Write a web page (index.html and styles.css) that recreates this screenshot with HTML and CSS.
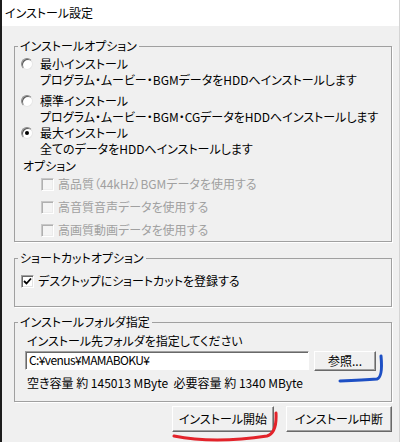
FILE: index.html
```html
<!DOCTYPE html>
<html lang="ja">
<head>
<meta charset="utf-8">
<title>インストール設定</title>
<link rel="stylesheet" href="styles.css">
</head>
<body>
<div class="window">
  <div class="titlebar">インストール設定</div>
  <div class="client">
    <fieldset class="group g1">
      <legend>インストールオプション</legend>
      <div class="opt o1">
        <span class="radio"></span>
        <div class="lines"><div>最小インストール</div><div>プログラム・ムービー・BGMデータをHDDへインストールします</div></div>
      </div>
      <div class="opt o2">
        <span class="radio"></span>
        <div class="lines"><div>標準インストール</div><div>プログラム・ムービー・BGM・CGデータをHDDへインストールします</div></div>
      </div>
      <div class="opt o3">
        <span class="radio checked"></span>
        <div class="lines"><div>最大インストール</div><div>全てのデータをHDDへインストールします</div></div>
      </div>
      <div class="sub">オプション</div>
      <div class="chk dis first"><span class="box"></span>高品質（44kHz）BGMデータを使用する</div>
      <div class="chk dis"><span class="box"></span>高音質音声データを使用する</div>
      <div class="chk dis"><span class="box"></span>高画質動画データを使用する</div>
    </fieldset>

    <fieldset class="group g2">
      <legend>ショートカットオプション</legend>
      <div class="chk"><span class="box checked"><svg viewBox="0 0 9 9" width="9" height="9"><path d="M1 4 L3.5 6.5 L8 1.5" fill="none" stroke="#000" stroke-width="1.8"/></svg></span>デスクトップにショートカットを登録する</div>
    </fieldset>

    <fieldset class="group g3">
      <legend>インストールフォルダ指定</legend>
      <div class="label">インストール先フォルダを指定してください</div>
      <div class="pathrow">
        <div class="input">C:¥venus¥MAMABOKU¥</div>
        <div class="btnwrap">
          <button class="btn browse">参照...</button>
          <svg class="scribble blue" viewBox="0 0 60 40" width="60" height="40"><path d="M6 33 Q30 32 43 31 Q49 29 47 8" fill="none" stroke="#1d4fc4" stroke-width="3" stroke-linecap="round"/></svg>
        </div>
      </div>
      <div class="free">空き容量 約 145013 MByte&nbsp; 必要容量 約 1340 MByte</div>
    </fieldset>

    <div class="buttons">
      <div class="btnwrap">
        <button class="btn start">インストール開始</button>
        <svg class="scribble red" viewBox="0 0 120 40" width="120" height="40"><path d="M5 31 Q45 39 98 31 Q108 28 107 8" fill="none" stroke="#e3232a" stroke-width="3" stroke-linecap="round"/></svg>
      </div>
      <button class="btn stop">インストール中断</button>
    </div>
  </div>
</div>
</body>
</html>
```

FILE: styles.css
```css
html, body {
  margin: 0;
  padding: 0;
  background: #ffffff;
}
body {
  font-family: "Noto Sans CJK JP", "Noto Sans", sans-serif;
  font-size: 12px;
  font-feature-settings: "palt";
  color: #000;
}
.window {
  width: 397px;
  height: 442px;
  border-left: 2px solid #1c1c1c;
  border-right: 1px solid #d4d4d4;
  display: flex;
  flex-direction: column;
  overflow: hidden;
}
.titlebar {
  height: 26px;
  line-height: 26px;
  padding-left: 3px;
  background: #ffffff;
  flex: none;
}
.client {
  flex: 1;
  background: #f0f0f0;
  padding: 13px 7px 0 12px;
  display: flex;
  flex-direction: column;
}
.group {
  margin: 0;
  min-width: 0;
  border: 1px solid #a0a0a0;
  box-shadow: 1px 1px 0 #ffffff;
  padding: 0 6px;
}
.group legend {
  line-height: 14px;
  padding: 0 2px;
  margin-left: -3px;
}
.g1 { padding-top: 3px; padding-bottom: 3px; }
.g2 { margin-top: 9px; padding-top: 8px; padding-bottom: 17px; }
.g3 { margin-top: 8px; padding: 4px 12px 10px 12px; }
.g3 legend { margin-left: -9px; }

.opt {
  display: flex;
  align-items: flex-start;
  line-height: 16px;
}
.o2 { margin-top: 5px; }
.lines { margin-left: 7px; }
.radio {
  flex: none;
  box-sizing: border-box;
  width: 12px;
  height: 12px;
  margin-top: 2px;
  border-radius: 50%;
  background: #fff;
  border: 1px solid;
  border-color: #8a8a8a #e6e6e6 #e6e6e6 #8a8a8a;
  box-shadow: inset 1px 1px 0 #5a5a5a;
  position: relative;
}
.radio.checked::after {
  content: "";
  position: absolute;
  left: 3px;
  top: 3px;
  width: 4px;
  height: 4px;
  border-radius: 50%;
  background: #000;
}
.sub {
  line-height: 16px;
  margin-left: 2px;
  margin-top: 1px;
}
.chk {
  display: flex;
  align-items: center;
  line-height: 16px;
  margin-top: 7px;
}
.chk.first { margin-top: 2px; }
.chk .box {
  flex: none;
  box-sizing: border-box;
  width: 13px;
  height: 13px;
  margin-right: 4px;
  background: #fff;
  border: 1px solid;
  border-color: #a0a0a0 #ffffff #ffffff #a0a0a0;
  box-shadow: inset 1px 1px 0 #696969, inset -1px -1px 0 #e3e3e3;
  display: flex;
  align-items: center;
  justify-content: center;
}
.chk.dis {
  color: #a0a0a0;
  margin-left: 20px;
}
.chk.dis .box {
  background: #f4f4f4;
  border-color: #c8c8c8 #ffffff #ffffff #c8c8c8;
  box-shadow: inset 1px 1px 0 #b0b0b0, inset -1px -1px 0 #ececec;
}
.g2 .chk { margin-top: 0; }

.label { line-height: 16px; }
.pathrow {
  display: flex;
  align-items: flex-start;
  margin-top: 2px;
  margin-left: -2px;
  gap: 5px;
}
.input {
  box-sizing: border-box;
  width: 284px;
  height: 19px;
  line-height: 16px;
  padding-left: 3px;
  background: #fff;
  border: 1px solid;
  border-color: #a0a0a0 #ffffff #ffffff #a0a0a0;
  box-shadow: inset 1px 1px 0 #696969;
  font-size: 12px;
  letter-spacing: -0.6px;
}
.free {
  line-height: 16px;
  margin-top: 4px;
}
.btnwrap {
  position: relative;
  display: flex;
}
.btn {
  box-sizing: border-box;
  font-family: inherit;
  font-size: 12px;
  font-feature-settings: "palt";
  color: #000;
  background: #f0f0f0;
  border: 1px solid;
  border-color: #ffffff #696969 #696969 #ffffff;
  box-shadow: inset -1px -1px 0 #a0a0a0;
  padding: 0;
  margin: 0;
  line-height: 16px;
}
.browse { width: 62px; height: 20px; }
.buttons {
  display: flex;
  justify-content: flex-end;
  gap: 12px;
  margin-top: 4px;
}
.start { width: 102px; height: 26px; }
.stop { width: 106px; height: 26px; }
.scribble {
  position: absolute;
  pointer-events: none;
}
.scribble.blue { left: 20px; top: -3px; }
.scribble.red { left: -3px; top: -1px; }
```
